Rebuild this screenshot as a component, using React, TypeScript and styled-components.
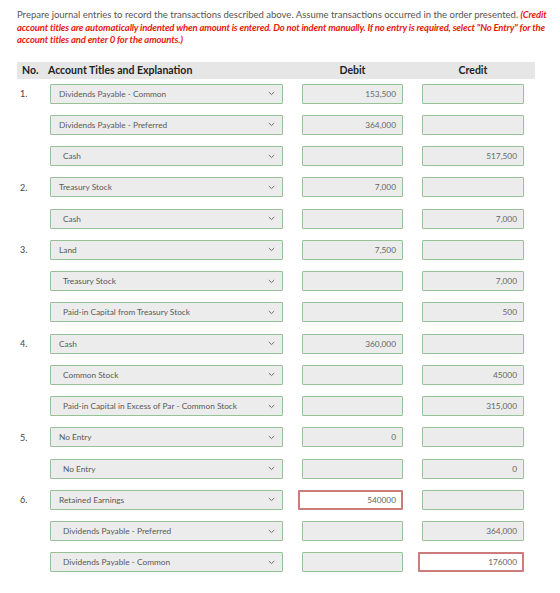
import React from 'react';
import styled, { createGlobalStyle } from 'styled-components';

const GlobalStyle = createGlobalStyle`
  body {
    margin: 0;
    background: #ffffff;
    font-family: "Lato", "Noto Sans", sans-serif;
  }
`;

type Entry = {
  no?: string;
  account: string;
  indent?: boolean;
  debit?: string;
  credit?: string;
  debitWrong?: boolean;
  creditWrong?: boolean;
};

const entries: Entry[] = [
  { no: '1.', account: 'Dividends Payable - Common', debit: '153,500' },
  { account: 'Dividends Payable - Preferred', debit: '364,000' },
  { account: 'Cash', indent: true, credit: '517,500' },
  { no: '2.', account: 'Treasury Stock', debit: '7,000' },
  { account: 'Cash', indent: true, credit: '7,000' },
  { no: '3.', account: 'Land', debit: '7,500' },
  { account: 'Treasury Stock', indent: true, credit: '7,000' },
  { account: 'Paid-in Capital from Treasury Stock', indent: true, credit: '500' },
  { no: '4.', account: 'Cash', debit: '360,000' },
  { account: 'Common Stock', indent: true, credit: '45000' },
  { account: 'Paid-in Capital in Excess of Par - Common Stock', indent: true, credit: '315,000' },
  { no: '5.', account: 'No Entry', debit: '0' },
  { account: 'No Entry', indent: true, credit: '0' },
  { no: '6.', account: 'Retained Earnings', debit: '540000', debitWrong: true },
  { account: 'Dividends Payable - Preferred', indent: true, credit: '364,000' },
  { account: 'Dividends Payable - Common', indent: true, credit: '176000', creditWrong: true },
];

const Chevron = () => (
  <svg width="7" height="5" viewBox="0 0 7 5">
    <path d="M0.8 1 L3.5 3.6 L6.2 1" fill="none" stroke="#6f6f6f" strokeWidth="1" />
  </svg>
);

export default function App() {
  return (
    <>
      <GlobalStyle />
      <Page>
        <Instructions>
          Prepare journal entries to record the transactions described above. Assume transactions occurred in the
          order presented.{' '}
          <Warning>
            (Credit account titles are automatically indented when amount is entered. Do not indent manually. If no
            entry is required, select "No Entry" for the account titles and enter 0 for the amounts.)
          </Warning>
        </Instructions>

        <Table>
          <HeaderBar>
            <HeadCell>No.</HeadCell>
            <HeadCell>Account Titles and Explanation</HeadCell>
            <HeadCell $amount>Debit</HeadCell>
            <HeadCell $amount>Credit</HeadCell>
          </HeaderBar>

          <Rows>
            {entries.map((e, i) => (
              <Row key={i}>
                <Number>{e.no}</Number>
                <Select>
                  <SelectText $indent={e.indent}>{e.account}</SelectText>
                  <Chevron />
                </Select>
                <AmountCell>
                  <Amount $wrong={e.debitWrong}>{e.debit}</Amount>
                </AmountCell>
                <AmountCell>
                  <Amount $wrong={e.creditWrong}>{e.credit}</Amount>
                </AmountCell>
              </Row>
            ))}
          </Rows>
        </Table>
      </Page>
    </>
  );
}

const Page = styled.div`
  padding: 9px 0 0 17px;
  width: 530px;
`;

const Instructions = styled.p`
  margin: 0;
  font-size: 9.5px;
  line-height: 12.5px;
  color: #555555;
  width: 530px;
`;

const Warning = styled.span`
  color: #e8190f;
  font-weight: 700;
  font-style: italic;
  letter-spacing: -0.15px;
`;

const Table = styled.div`
  margin-top: 15px;
  width: 518px;
`;

const grid = `
  display: grid;
  grid-template-columns: 33px 233px 120px 121px;
  padding-right: 11px;
`;

const HeaderBar = styled.div`
  ${grid};
  height: 17px;
  align-items: center;
  background: #e6e6e6;
`;

const HeadCell = styled.div<{ $amount?: boolean }>`
  font-size: 10.5px;
  font-weight: 700;
  color: #222222;
  white-space: nowrap;
  text-align: ${(p) => (p.$amount ? 'center' : 'left')};
  padding-left: ${(p) => (p.$amount ? '19px' : '0')};
  &:first-child {
    padding-left: 5px;
  }
  &:nth-child(2) {
    margin-left: -2px;
  }
`;

const Rows = styled.div`
  display: flex;
  flex-direction: column;
  gap: 11.27px;
  margin-top: 5px;
`;

const Row = styled.div`
  ${grid};
  height: 20px;
  align-items: stretch;
`;

const Number = styled.div`
  display: flex;
  align-items: center;
  padding-left: 3px;
  font-size: 9px;
  color: #444444;
`;

const Select = styled.div`
  box-sizing: border-box;
  display: flex;
  align-items: center;
  justify-content: space-between;
  padding: 0 7px 0 8px;
  background: #ececec;
  border: 1px solid #97c297;
  border-radius: 1px;
`;

const SelectText = styled.span<{ $indent?: boolean }>`
  font-size: 8.3px;
  color: #595959;
  padding-left: ${(p) => (p.$indent ? '4px' : '0')};
  white-space: nowrap;
`;

const AmountCell = styled.div`
  display: flex;
  justify-content: flex-end;
  padding-left: 19px;
`;

const Amount = styled.div<{ $wrong?: boolean }>`
  box-sizing: border-box;
  flex: 1;
  margin-left: ${(p) => (p.$wrong ? '-4px' : '0')};
  display: flex;
  align-items: center;
  justify-content: flex-end;
  padding-right: ${(p) => (p.$wrong ? '5px' : '6px')};
  font-size: 8.3px;
  color: #666666;
  background: ${(p) => (p.$wrong ? '#ffffff' : '#ececec')};
  border: ${(p) => (p.$wrong ? '2px solid #cd7b7b' : '1px solid #97c297')};
  border-radius: 1px;
`;
